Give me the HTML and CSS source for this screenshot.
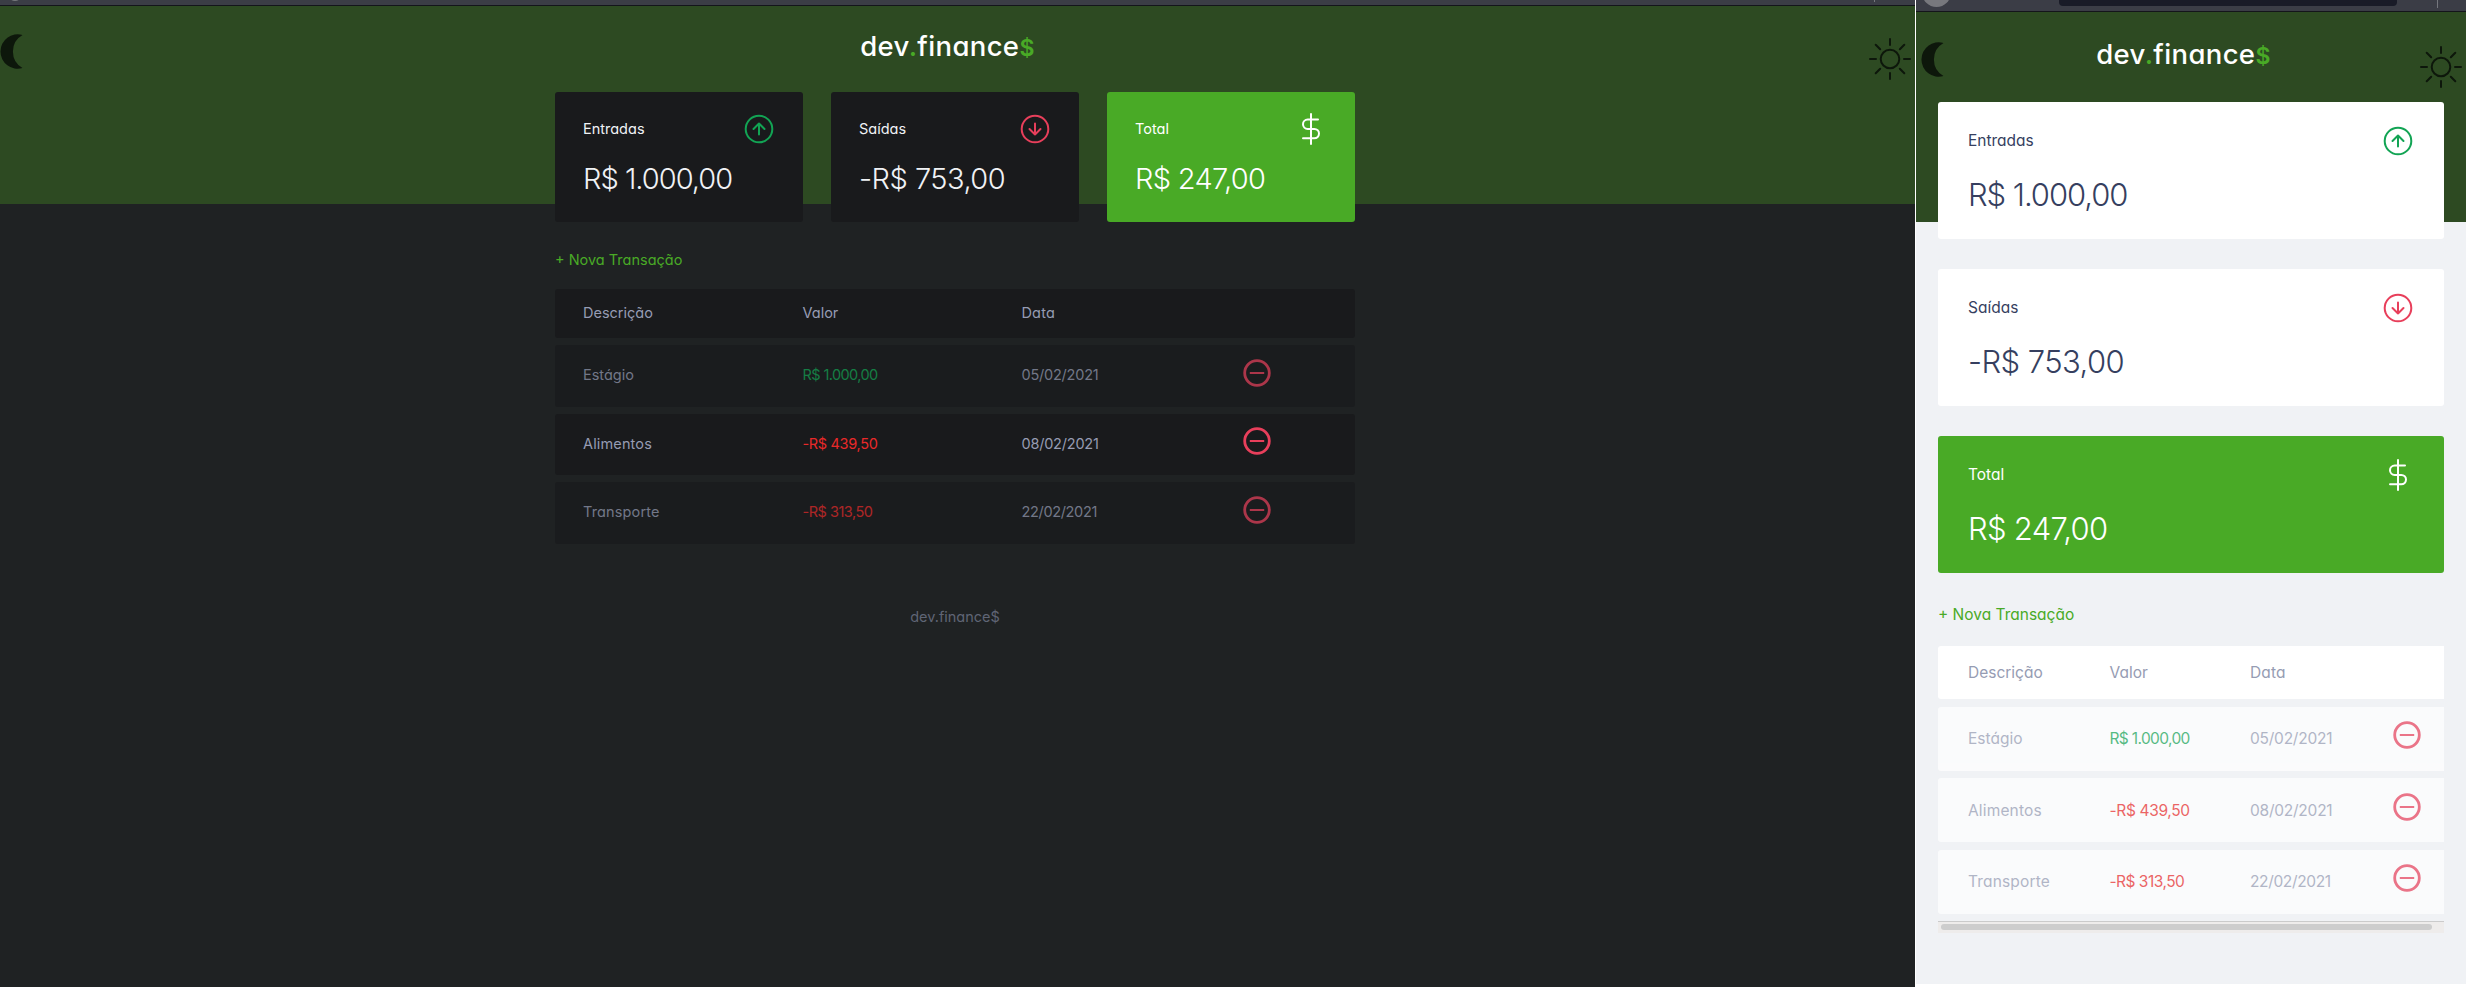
FILE: index.html
```html
<!DOCTYPE html>
<html lang="pt-BR">
<head>
<meta charset="utf-8">
<title>dev.finance$</title>
<link rel="stylesheet" href="styles.css">
</head>
<body>
<svg class="defs" aria-hidden="true">
  <symbol id="moon" viewBox="0 0 24 35"><path d="M23.500 1A17.200 17.200 0 1 0 23.500 34A19 19 0 0 1 23.500 1Z" fill="currentColor"/></symbol>
  <symbol id="sun" viewBox="0 0 42 42"><g fill="none" stroke="currentColor" stroke-width="2" stroke-linecap="round"><circle cx="21" cy="21" r="9.300"/><path d="M21 1v6M21 35v6M1 21h6M35 21h6M6.700 6.700l4.500 4.500M30.800 30.800l4.500 4.500M35.300 6.700l-4.500 4.500M11.200 30.800l-4.500 4.500"/></g></symbol>
  <symbol id="up" viewBox="0 0 30 30"><g fill="none" stroke="currentColor" stroke-width="2" stroke-linecap="round" stroke-linejoin="round"><circle cx="15" cy="15" r="13.300"/><path d="M15 20.500V9.500M9.500 15L15 9.500L20.500 15"/></g></symbol>
  <symbol id="down" viewBox="0 0 30 30"><g fill="none" stroke="currentColor" stroke-width="2" stroke-linecap="round" stroke-linejoin="round"><circle cx="15" cy="15" r="13.300"/><path d="M15 9.500V20.500M9.500 15L15 20.500L20.500 15"/></g></symbol>
  <symbol id="dollar" viewBox="0 0 18 32"><path d="M9 1v30M16 6.500H5.700a4.700 4.700 0 0 0 0 9.400h6.600a4.700 4.700 0 0 1 0 9.400H1" fill="none" stroke="currentColor" stroke-width="2" stroke-linecap="round"/></symbol>
  <symbol id="minus" viewBox="0 0 28 28"><g fill="none" stroke="currentColor"><circle cx="14" cy="14" r="12.300" stroke-width="2.800"/><path d="M6.800 14h14.400" stroke-width="2"/></g></symbol>
</svg>
<main class="stage">
<section class="panel dark">
  <div class="chrome"><i class="knob"></i><i class="tick"></i></div>
  <header class="top">
    <svg class="moon"><use href="#moon"/></svg>
    <h1 class="logo">dev<b>.</b>finance<b class="cash">$</b></h1>
    <svg class="sun"><use href="#sun"/></svg>
  </header>
  <div class="content">
    <div class="cards">
      <article class="card"><h2><span>Entradas</span><svg class="ico in"><use href="#up"/></svg></h2><p class="a-1000">R$ 1.000,00</p></article>
      <article class="card"><h2><span>Saídas</span><svg class="ico out"><use href="#down"/></svg></h2><p class="a-753">-R$ 753,00</p></article>
      <article class="card total"><h2><span>Total</span><svg class="dollar"><use href="#dollar"/></svg></h2><p class="a-247">R$ 247,00</p></article>
    </div>
    <a class="new">+ Nova Transação</a>
    <div class="table">
      <div class="row head"><span>Descrição</span><span>Valor</span><span class="t-data">Data</span></div>
      <div class="row"><span>Estágio</span><span class="v-1000 plus">R$ 1.000,00</span><span class="date">05/02/2021</span><svg class="minus"><use href="#minus"/></svg></div>
      <div class="row active"><span class="wide">Alimentos</span><span class="v-439 neg">-R$ 439,50</span><span class="date">08/02/2021</span><svg class="minus"><use href="#minus"/></svg></div>
      <div class="row"><span class="wide">Transporte</span><span class="v-313 neg">-R$ 313,50</span><span class="date d-22">22/02/2021</span><svg class="minus"><use href="#minus"/></svg></div>
    </div>
    <footer class="foot">dev.finance$</footer>
  </div>
</section>
<section class="panel light">
  <div class="chrome"><i class="knob"></i><i class="address"></i><i class="tick"></i></div>
  <header class="top">
    <svg class="moon"><use href="#moon"/></svg>
    <h1 class="logo">dev<b>.</b>finance<b class="cash">$</b></h1>
    <svg class="sun"><use href="#sun"/></svg>
  </header>
  <div class="content">
    <div class="cards">
      <article class="card"><h2><span>Entradas</span><svg class="ico in"><use href="#up"/></svg></h2><p class="a-1000">R$ 1.000,00</p></article>
      <article class="card"><h2><span>Saídas</span><svg class="ico out"><use href="#down"/></svg></h2><p class="a-753">-R$ 753,00</p></article>
      <article class="card total"><h2><span>Total</span><svg class="dollar"><use href="#dollar"/></svg></h2><p class="a-247">R$ 247,00</p></article>
    </div>
    <a class="new">+ Nova Transação</a>
    <div class="table">
      <div class="row head"><span>Descrição</span><span>Valor</span><span class="t-data">Data</span></div>
      <div class="row"><span>Estágio</span><span class="v-1000 plus">R$ 1.000,00</span><span class="date">05/02/2021</span><svg class="minus"><use href="#minus"/></svg></div>
      <div class="row"><span class="wide">Alimentos</span><span class="v-439 neg">-R$ 439,50</span><span class="date">08/02/2021</span><svg class="minus"><use href="#minus"/></svg></div>
      <div class="row"><span class="wide">Transporte</span><span class="v-313 neg">-R$ 313,50</span><span class="date d-22">22/02/2021</span><svg class="minus"><use href="#minus"/></svg></div>
    </div>
    <div class="scroll"><i></i></div>
  </div>
</section>
</main>
</body>
</html>
```
FILE: styles.css
```css
* { box-sizing: border-box; margin: 0; padding: 0; }
body { background: #fff; font-family: Inter, "Open Sans", sans-serif; font-weight: 400; font-feature-settings: "cv11" 1; overflow: hidden; }
.defs { position: absolute; width: 0; height: 0; }
.stage { display: flex; gap: 1px; align-items: flex-start; width: 2466px; height: 991px; }
.panel { position: relative; overflow: hidden; white-space: nowrap; }
.dark { width: 1915px; height: 987px; background: #1f2223; font-size: 14.500px; }
.light { width: 550px; height: 984px; background: #f0f2f5; font-size: 15.500px; }

.chrome { position: relative; overflow: hidden; background: #3b3d46; border-bottom: 1px solid #14151b; }
.dark .chrome { height: 6px; }
.light .chrome { height: 12px; }
.chrome i { position: absolute; display: block; }
.knob { border-radius: 50%; background: #77787d; }
.dark .knob { left: 8px; top: -13px; width: 14px; height: 14px; }
.light .knob { left: 6px; top: -22px; width: 29px; height: 29px; }
.tick { width: 1px; background: #75777e; top: 0; }
.dark .tick { left: 1874px; height: 2px; }
.light .tick { left: 521px; height: 8px; }
.address { left: 143px; top: 0; width: 338px; height: 6px; background: #191b27; border-radius: 0 0 4px 4px; }

.top { display: flex; justify-content: space-between; align-items: flex-start; background: #2d4a22; color: #0d170b; }
.dark .top { height: 198px; padding: 28px 4px 0 0; }
.light .top { height: 210px; padding: 30px 4px 0 4px; }
.moon { width: 24px; height: 35px; }
.dark .moon { margin-left: -1px; }
.sun { width: 42px; height: 42px; margin-top: 4px; }
.logo { font-size: 27.500px; font-weight: 500; line-height: 32px; letter-spacing: .0130em; color: #fff; }
.dark .logo { margin: -4px 0 0 3px; }
.light .logo { margin: -4px 0 0 3px; }
.logo b { color: #49aa26; font-weight: 500; }
.logo .cash { font-size: 23px; font-weight: 600; }

.content { display: flex; flex-direction: column; }
.dark .content { width: 800px; margin: -112px 0 0 555px; }
.light .content { width: 506px; margin: -120px 0 0 22px; }
.cards { display: grid; }
.dark .cards { grid-template-columns: repeat(3, 248px); gap: 28px; }
.light .cards { gap: 30px; }
.card { background: #191a1c; color: #f0f2f5; border-radius: 3px; padding: 20px 28px 0; height: 130px; }
.light .card { background: #fff; color: #363f5f; padding: 22px 30px 0; height: 137px; }
.panel .card.total { background: #49aa26; color: #fff; }
.card h2 { display: flex; justify-content: space-between; align-items: center; height: 34px; font-size: 1em; font-weight: 400; }
.card h2 span { margin-top: -1px; }
.card p { font-weight: 350; font-size: 29px; line-height: 40px; margin-top: 13px; }
.light .card p { font-size: 31px; margin-top: 17px; }
.a-1000 { letter-spacing: -.0340em; }
.a-753 { letter-spacing: -.0180em; }
.a-247 { letter-spacing: -.0230em; }
.ico { width: 30px; height: 30px; margin-right: 1px; }
.in { color: #12a454; }
.out { color: #e83f5b; }
.dollar { width: 18px; height: 32px; margin-right: 7px; }

.new { display: block; color: #49aa26; line-height: 20px; margin: 28px 0 19px 0; }
.light .new { margin: 32px 0 21px 0; }
.table { display: flex; flex-direction: column; gap: 7px; color: #969cb3; }
.light .table { gap: 7.500px; }
.row { display: grid; align-items: center; background: #191a1c; border-radius: 3px; opacity: .7; padding-left: 28px; height: 61.500px; grid-template-columns: 219.500px 219px 221.500px 28px; }
.light .row { background: #fff; border-radius: 3px 0 0 3px; padding-left: 30px; height: 64px; grid-template-columns: 141.500px 140.500px 143px 28px; }
.row.head, .row.active { opacity: 1; }
.row.head { height: 49px; }
.light .row.head { height: 53px; }
.row span { margin-top: -2px; }
.light .row span { margin-top: 0; }
.t-data, .wide { letter-spacing: .0100em; }
.v-1000 { letter-spacing: -.0414em; }
.v-439 { letter-spacing: -.0225em; }
.v-313 { letter-spacing: -.0332em; }
.date { letter-spacing: -.0150em; }
.d-22 { letter-spacing: -.0232em; }
.plus { color: #12a454; }
.neg { color: #e92929; }
.minus { width: 28px; height: 28px; color: #e83f5b; margin-bottom: 6px; }
.light .minus { margin-bottom: 7px; }
.foot { text-align: center; color: #5f6575; margin-top: 63px; line-height: 20px; }
.scroll { height: 12px; margin-top: 7px; padding: 2px 12px 0 3px; background: #eeeceb; border-top: 1px solid #cbcbcb; }
.scroll i { display: block; height: 6px; border-radius: 3px; background: #cdcdcd; }
```
